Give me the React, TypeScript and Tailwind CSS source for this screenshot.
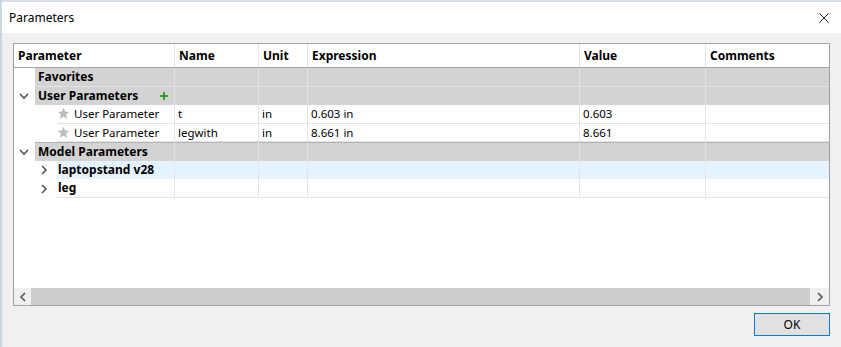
import React from "react";

// Columnas de la tabla: Parameter, Name, Unit, Expression, Value, Comments
const COLS = "grid-cols-[161px_84px_49px_272px_126px_1fr]";

function Chevron({ dir }: { dir: "down" | "right" | "left" }) {
  const d =
    dir === "down" ? "M1 3 L5 7 L9 3" : dir === "right" ? "M3 1 L7 5 L3 9" : "M7 1 L3 5 L7 9";
  return (
    <svg width="10" height="10" viewBox="0 0 10 10" className="shrink-0">
      <path d={d} fill="none" stroke="#555" strokeWidth="1.6" />
    </svg>
  );
}

function Star() {
  return (
    <svg width="13" height="13" viewBox="0 0 24 24" className="shrink-0">
      <path
        d="M12 1.5 L15.1 8.2 L22.5 9 L17 14 L18.5 21.5 L12 17.8 L5.5 21.5 L7 14 L1.5 9 L8.9 8.2 Z"
        fill="#bdbdbd"
      />
    </svg>
  );
}

function Plus() {
  return (
    <svg width="8" height="8" viewBox="0 0 8 8" className="shrink-0">
      <path d="M3 0h2v3h3v2H5v3H3V5H0V3h3z" fill="#2f9e2f" />
    </svg>
  );
}

type Fila = {
  tipo: "grupo" | "hijo" | "modelo";
  sangria: number;
  flecha?: "down" | "right";
  texto: string;
  negrita?: boolean;
  estrella?: boolean;
  mas?: boolean;
  celdas?: string[];
  fondo?: string;
  bordeArriba?: boolean;
};

const FILAS: Fila[] = [
  { tipo: "grupo", sangria: 21, texto: "Favorites", negrita: true },
  { tipo: "grupo", sangria: 21, flecha: "down", texto: "User Parameters", negrita: true, mas: true },
  { tipo: "hijo", sangria: 43, texto: "User Parameter", estrella: true, celdas: ["t", "in", "0.603 in", "0.603", ""] },
  { tipo: "hijo", sangria: 43, texto: "User Parameter", estrella: true, celdas: ["legwith", "in", "8.661 in", "8.661", ""] },
  { tipo: "grupo", sangria: 21, flecha: "down", texto: "Model Parameters", negrita: true, bordeArriba: true },
  { tipo: "modelo", sangria: 43, flecha: "right", texto: "laptopstand v28", negrita: true, fondo: "bg-[#e5f3ff]" },
  { tipo: "modelo", sangria: 43, flecha: "right", texto: "leg", negrita: true },
];

function FilaTabla({ f }: { f: Fila }) {
  const gris = f.tipo === "grupo";
  const fondo = gris ? "bg-[#d3d3d3]" : f.fondo ?? "bg-white";
  const linea = gris ? "border-[#e2e2e2]" : "border-[#e4e4e4]";
  const celdas = f.celdas ?? ["", "", "", "", ""];
  const pad = f.tipo === "grupo" ? "pl-[3px]" : f.tipo === "hijo" ? "pl-0" : "pl-[1px]";
  return (
    <div className={`grid ${COLS} h-[18.5px]`}>
      <div className="flex h-full">
        <div
          className="flex h-full shrink-0 items-center bg-white pl-[5px]"
          style={{ width: f.sangria }}
        >
          {f.flecha && (
            <span className={f.tipo === "modelo" ? "ml-[20px]" : ""}>
              <Chevron dir={f.flecha} />
            </span>
          )}
        </div>
        <div
          className={`flex h-full min-w-0 flex-1 items-center gap-[4px] border-b border-r ${linea} ${fondo} ${
            f.bordeArriba ? "border-t border-t-[#b4b4b4]" : ""
          } ${pad} pr-[6px]`}
        >
          {f.estrella && <Star />}
          <span className={`flex-1 truncate ${f.negrita ? "font-bold" : "text-[11.5px]"}`}>{f.texto}</span>
          {f.mas && <Plus />}
        </div>
      </div>
      {celdas.map((c, i) => (
        <div
          key={i}
          className={`flex h-full items-center truncate border-b text-[11.5px] ${i < 4 ? "border-r" : ""} ${linea} ${fondo} ${
            f.bordeArriba ? "border-t border-t-[#b4b4b4]" : ""
          } pl-[3px]`}
        >
          {c}
        </div>
      ))}
    </div>
  );
}

export default function App() {
  const cabeceras = ["Parameter", "Name", "Unit", "Expression", "Value", "Comments"];
  return (
    <div
      className="flex h-[347px] w-[841px] flex-col overflow-hidden border-l-2 border-l-[#c9d6e4] bg-[#f0f0f0] text-[12px] text-black"
      style={{ fontFamily: '"Segoe UI", "Noto Sans", sans-serif' }}
    >
      {/* Franja de la ventana de atrás */}
      <div className="h-[2px] shrink-0 bg-[#d6dde6]" />

      {/* Barra de título */}
      <div className="flex h-[31px] shrink-0 items-center justify-between bg-white pl-[7px] pr-[12px]">
        <span className="text-[12px]">Parameters</span>
        <svg width="10" height="10" viewBox="0 0 10 10">
          <path d="M0.5 0.5 L9.5 9.5 M9.5 0.5 L0.5 9.5" stroke="#222" strokeWidth="1" />
        </svg>
      </div>

      {/* Cuerpo */}
      <div className="flex flex-1 flex-col px-[11px] pt-[10px]">
        <div className="flex h-[263px] flex-col border border-[#a0a0a0] bg-white">
          {/* Cabecera */}
          <div className={`grid ${COLS} h-[24px] shrink-0 border-b border-[#a6a6a6]`}>
            {cabeceras.map((h, i) => (
              <div
                key={h}
                className={`flex items-center pl-[4px] pt-[1px] font-bold ${i < 5 ? "border-r border-[#e5e5e5]" : ""}`}
              >
                {h}
              </div>
            ))}
          </div>

          {FILAS.map((f, i) => (
            <FilaTabla key={i} f={f} />
          ))}

          <div className="flex-1" />

          {/* Barra de desplazamiento horizontal */}
          <div className="flex h-[17px] shrink-0 bg-[#e8e8e8]">
            <div className="flex w-[17px] items-center justify-center bg-[#f0f0f0]">
              <Chevron dir="left" />
            </div>
            <div className="flex-1 bg-[#cdcdcd]" />
            <div className="flex w-[19px] items-center justify-center bg-[#f0f0f0]">
              <Chevron dir="right" />
            </div>
          </div>
        </div>

        {/* Botón OK */}
        <div className="mt-[7px] flex justify-end">
          <button className="h-[23px] w-[76px] border border-[#0078d7] bg-[#e1e1e1] text-[12px]">
            OK
          </button>
        </div>
      </div>
    </div>
  );
}
